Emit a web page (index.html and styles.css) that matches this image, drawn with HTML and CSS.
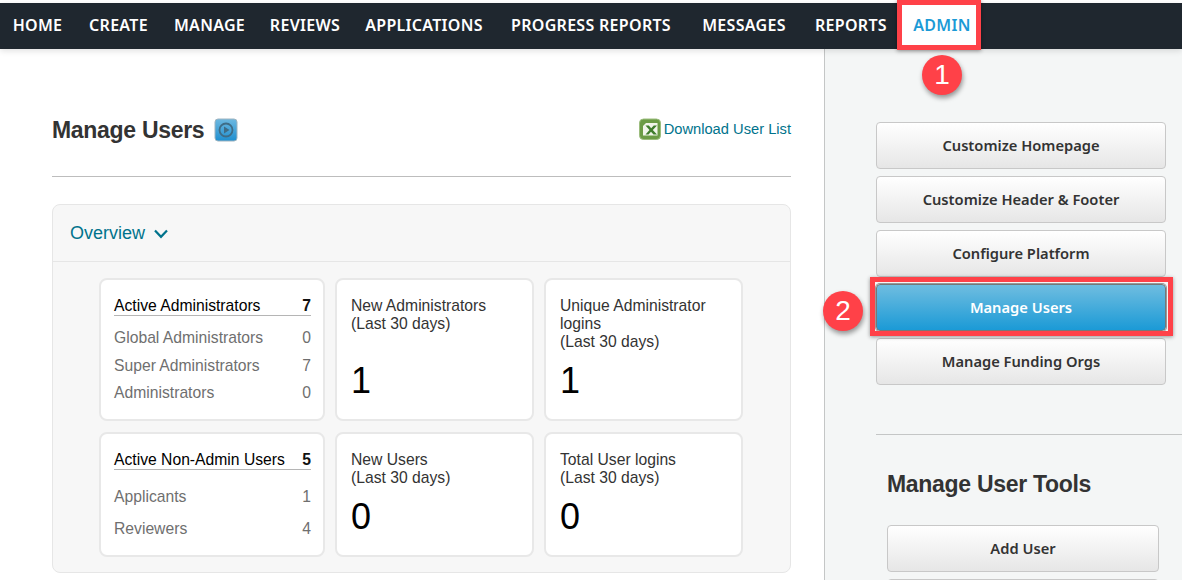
FILE: index.html
```html
<!DOCTYPE html>
<html lang="en">
<head>
<meta charset="utf-8">
<title>Manage Users</title>
<link rel="stylesheet" href="styles.css">
</head>
<body>
<nav class="nav">
  <a class="nav-item">HOME</a>
  <a class="nav-item">CREATE</a>
  <a class="nav-item">MANAGE</a>
  <a class="nav-item">REVIEWS</a>
  <a class="nav-item">APPLICATIONS</a>
  <a class="nav-item">PROGRESS REPORTS</a>
  <a class="nav-item">MESSAGES</a>
  <a class="nav-item">REPORTS</a>
  <a class="nav-item nav-active">ADMIN</a>
</nav>
<div class="layout">
  <main class="main">
    <div class="title-row">
      <h1 class="title">Manage Users
        <svg class="play" width="24" height="24" viewBox="0 0 24 24"><defs><linearGradient id="pg" x1="0" y1="0" x2="0" y2="1"><stop offset="0" stop-color="#6db8e0"/><stop offset="1" stop-color="#1f8fd0"/></linearGradient></defs><rect x="1" y="1" width="22" height="22" rx="3" fill="url(#pg)" stroke="#9fb4c0"/><circle cx="12" cy="12" r="6.500" fill="none" stroke="#3f6c86" stroke-width="1.800"/><path d="M10 8.500 L15.500 12 L10 15.500Z" fill="#3f6c86"/></svg>
      </h1>
      <a class="download">
        <svg width="24" height="24" viewBox="0 0 24 24"><rect x="1.500" y="2" width="21" height="20.500" rx="4" fill="#6c9c46" stroke="#9cbd7e"/><path d="M8 6 H19.500 V18.500 H5 V9Z" fill="#f1f5ea"/><path d="M7.500 8.500 L11.500 13 L7.500 17.500 H10.500 L13 14.700 L15.500 17.500 H19 L14.800 13 L19 8.500 H15.800 L13.200 11.300 L10.800 8.500Z" fill="#3f7d2c"/></svg>
        <span>Download User List</span>
      </a>
    </div>
    <section class="panel">
      <div class="panel-head">Overview
        <svg class="chev" width="14" height="10" viewBox="0 0 14 10"><path d="M1 1.500 L7 7.800 L13 1.500" fill="none" stroke="#00738c" stroke-width="2.200"/></svg>
      </div>
      <div class="grid">
        <div class="card">
          <div class="row-head"><span>Active Administrators</span><b>7</b></div>
          <div class="rows rows-a">
            <div class="row"><span>Global Administrators</span><span>0</span></div>
            <div class="row"><span>Super Administrators</span><span>7</span></div>
            <div class="row"><span>Administrators</span><span>0</span></div>
          </div>
        </div>
        <div class="card stat">
          <div class="stat-label">New Administrators<br>(Last 30 days)</div>
          <div class="stat-value stat-value-low">1</div>
        </div>
        <div class="card stat">
          <div class="stat-label">Unique Administrator logins<br>(Last 30 days)</div>
          <div class="stat-value">1</div>
        </div>
        <div class="card">
          <div class="row-head"><span>Active Non-Admin Users</span><b>5</b></div>
          <div class="rows rows-b">
            <div class="row"><span>Applicants</span><span>1</span></div>
            <div class="row"><span>Reviewers</span><span>4</span></div>
          </div>
        </div>
        <div class="card stat">
          <div class="stat-label">New Users<br>(Last 30 days)</div>
          <div class="stat-value">0</div>
        </div>
        <div class="card stat">
          <div class="stat-label">Total User logins<br>(Last 30 days)</div>
          <div class="stat-value">0</div>
        </div>
      </div>
    </section>
  </main>
  <aside class="side">
    <div class="btn-stack">
      <a class="btn">Customize Homepage</a>
      <a class="btn">Customize Header &amp; Footer</a>
      <a class="btn">Configure Platform</a>
      <a class="btn btn-blue">Manage Users</a>
      <a class="btn">Manage Funding Orgs</a>
    </div>
    <div class="tools">
      <h2 class="tools-title">Manage User Tools</h2>
      <a class="btn">Add User</a>
      <a class="btn">&nbsp;</a>
    </div>
  </aside>
</div>
<div class="mark mark-admin"></div>
<div class="mark mark-users"></div>
<div class="badge badge-1">1</div>
<div class="badge badge-2">2</div>
</body>
</html>
```

FILE: styles.css
```css
* { box-sizing: border-box; }
html, body { height: 580px; overflow: hidden; }
body { margin: 0; background: #fff; font-family: "Liberation Sans", Arial, sans-serif; position: relative; padding-top: 3px; }

.nav { height: 46px; background: #1f272f; display: grid; grid-template-columns: 47px 61px 67px 70px 114px 166px 86px 74px 62px; column-gap: 27px; padding-left: 14px; box-shadow: 0 2px 6px rgba(0,0,0,.12); position: relative; z-index: 2; }
.nav-item { font-family: "Noto Sans", sans-serif; font-weight: 600; font-size: 16px; letter-spacing: .3px; white-space: nowrap; color: #fff; display: flex; align-items: center; justify-content: center; padding-bottom: 2px; }
.nav-active { background: #fff; color: #1b9ad6; margin-left: -14px; padding-left: 6px; width: 76px; }

.layout { display: flex; height: 531px; }
.main { width: 825px; flex: none; border-right: 1px solid #c4c6c6; padding-left: 52px; padding-right: 33px; }
.title-row { display: flex; justify-content: space-between; align-items: flex-start; height: 128px; padding-top: 66px; border-bottom: 1px solid #bdbdbd; }
.title { margin: 1px 0 0; font-size: 23px; letter-spacing: -.3px; line-height: 28px; font-weight: 700; color: #333; display: flex; align-items: center; gap: 10px; }
.download { display: flex; align-items: center; gap: 2px; font-size: 14.700px; color: #00738c; height: 28px; }

.panel { margin-top: 27px; height: 369px; background: #f7f7f7; border: 1px solid #e6e6e6; border-radius: 8px; }
.panel-head { height: 57px; border-bottom: 1px solid #e6e6e6; padding: 1px 0 0 17px; display: flex; align-items: center; gap: 8px; font-size: 18px; color: #00738c; }
.chev { margin-left: 1px; }
.grid { display: grid; grid-template-columns: 226px 199px 199px; grid-template-rows: 143px 125px; gap: 11px 10px; padding: 16px 0 0 46px; }
.card { background: #fff; border: 2px solid #e8e8e8; border-radius: 8px; padding: 17px 12px 0 13px; color: #333; font-size: 15.700px; }
.row-head { display: flex; justify-content: space-between; border-bottom: 1px solid #b5b5b5; color: #000; line-height: 18px; height: 19px; }
.row-head b { color: #111; }
.rows { color: #6f6f6f; }
.row { display: flex; justify-content: space-between; }
.rows-a { padding-top: 8px; line-height: 27.500px; }
.rows-b { padding-top: 11px; line-height: 32px; }
.stat { display: flex; flex-direction: column; padding: 17px 13px 0 14px; }
.stat-label { line-height: 18px; color: #333; }
.stat-value { font-size: 36px; line-height: 44px; color: #000; margin-top: 8px; }
.stat-value-low { margin-top: 26px; }

.side { flex: 1; min-width: 0; background: #f4f6f6; padding: 73px 0 0 51px; overflow: hidden; }
.btn-stack { display: flex; flex-direction: column; gap: 7px; width: 290px; height: 312px; }
.btn { display: flex; align-items: center; justify-content: center; height: 47px; flex: none; padding-bottom: 2px; border: 1px solid #c8c8c8; border-radius: 4px; background: linear-gradient(#fff, #e6e6e6); font-family: "Noto Sans", sans-serif; font-weight: 600; font-size: 14.700px; color: #333; }
.btn-blue { background: linear-gradient(#6fbde0, #1b9ad6); border-color: #777; box-shadow: 0 0 0 1px #999; color: #fff; }
.tools { border-top: 1px solid #c4c6c6; padding: 30px 0 0 11px; }
.tools-title { margin: 0 0 22px; font-size: 23px; letter-spacing: -.3px; line-height: 38px; font-weight: 700; color: #333; }
.tools .btn { width: 272px; margin-bottom: 7px; }

.mark { position: absolute; border: 5px solid #ff4148; box-shadow: 0 1px 4px rgba(0,0,0,.4); z-index: 3; }
.mark-admin { left: 897px; top: 0; width: 84px; height: 50px; }
.mark-users { left: 870px; top: 277px; width: 303px; height: 59px; }
.badge { position: absolute; width: 40px; height: 40px; border-radius: 50%; background: #ff4148; color: #fff; font-size: 28px; line-height: 40px; text-align: center; box-shadow: 1px 3px 5px rgba(0,0,0,.4); z-index: 3; }
.badge-1 { left: 922px; top: 55px; }
.badge-2 { left: 823px; top: 291px; }
```
